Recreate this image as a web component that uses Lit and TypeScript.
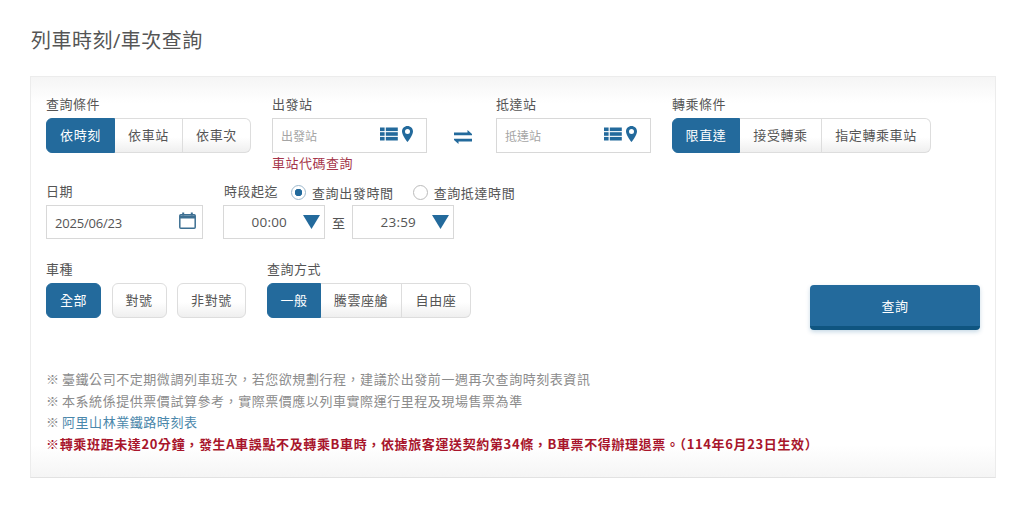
import { LitElement, html, css, svg } from 'lit'
import { customElement, state } from 'lit/decorators.js'
import { classMap } from 'lit/directives/class-map.js'

const BLUE = '#236a9c'

const listIcon = svg`<svg class="ico" width="18" height="14" viewBox="0 0 18 14" fill="${BLUE}">
  <rect x="0" y="0.5" width="4.6" height="3.6"/><rect x="5.8" y="0.5" width="12" height="3.6"/>
  <rect x="0" y="5.2" width="4.6" height="3.6"/><rect x="5.8" y="5.2" width="12" height="3.6"/>
  <rect x="0" y="9.9" width="4.6" height="3.6"/><rect x="5.8" y="9.9" width="12" height="3.6"/>
</svg>`

const pinIcon = svg`<svg class="ico" width="11" height="16" viewBox="0 0 11 16">
  <path fill="${BLUE}" fill-rule="evenodd" d="M5.5 0C2.5 0 0 2.4 0 5.4 0 9 5.5 16 5.5 16S11 9 11 5.4C11 2.4 8.5 0 5.5 0zM5.5 3a2.5 2.5 0 1 1 0 5 2.5 2.5 0 0 1 0-5z"/>
</svg>`

const swapIcon = svg`<svg width="18" height="14" viewBox="0 0 18 14" fill="${BLUE}">
  <path d="M0 2.6h13.5V0L18 4v1.2H0zM18 8.8v2.6H4.5V14L0 10V8.8z"/>
</svg>`

const calendarIcon = svg`<svg width="17" height="17" viewBox="0 0 17 17" fill="none" stroke="#3c6f92">
  <rect x="0.8" y="2.8" width="15.4" height="13.4" rx="1" stroke-width="1.5"/>
  <path d="M1 5h15" stroke-width="3"/>
  <path d="M4.2 0.5v3M12.8 0.5v3" stroke-width="2"/>
</svg>`

const caretIcon = svg`<svg width="17" height="14" viewBox="0 0 17 14"><path fill="${BLUE}" d="M0 0h17L8.5 14z"/></svg>`

type Seg = { label: string; w: number }

@customElement('app-root')
export class AppRoot extends LitElement {
  @state() mode = 0
  @state() transfer = 0
  @state() trainType = 0
  @state() method = 0
  @state() timeKind = 0

  static override styles = css`
    :host {
      --blue: #236a9c;
      display: block;
      height: 507px;
      box-sizing: border-box;
      padding: 0 28px 0 30px;
      background: #fff;
      font-family: 'Open Sans', 'Noto Sans CJK TC', sans-serif;
      font-size: 13px;
      color: #555;
      overflow: hidden;
    }
    h1 {
      margin: 0;
      height: 76px;
      padding: 27px 0 0 1px;
      box-sizing: border-box;
      font-size: 20px;
      line-height: 27px;
      font-weight: 400;
      color: #555;
      letter-spacing: 0.5px;
    }
    .panel {
      box-sizing: border-box;
      width: 966px;
      height: 402px;
      padding: 19px 15px 0;
      border: 1px solid #ececec;
      border-bottom-color: #e2e2e2;
      background: linear-gradient(#f5f5f5, #fff 26px, #fff calc(100% - 32px), #f5f5f5);
    }
    .row {
      display: flex;
      align-items: flex-start;
    }
    .row1 { height: 84px; }
    .row2 { height: 59px; }
    .row3 { height: 69px; margin-top: 22px; }
    .field { display: flex; flex-direction: column; }
    .label {
      height: 22px;
      line-height: 16px;
      letter-spacing: 0.5px;
      white-space: nowrap;
    }
    .row2 .label { height: 25px; line-height: 22px; }
    .seg {
      display: flex;
      height: 35px;
      box-sizing: border-box;
      border-radius: 6px;
    }
    button.opt {
      box-sizing: border-box;
      height: 35px;
      padding: 0 0 2px;
      font: inherit;
      letter-spacing: 0.6px;
      color: #555;
      background: linear-gradient(#fff 55%, #efefef);
      border: 1px solid #ddd;
      border-left-width: 0;
      cursor: pointer;
    }
    .seg button.opt:first-child { border-left-width: 1px; border-radius: 6px 0 0 6px; }
    .seg button.opt:last-child { border-radius: 0 6px 6px 0; }
    button.opt.on {
      background: var(--blue);
      border-color: var(--blue);
      color: #fff;
    }
    button.solo { border-left-width: 1px; border-radius: 6px; }
    .station {
      box-sizing: border-box;
      width: 155px;
      height: 35px;
      display: flex;
      align-items: center;
      padding: 0 13px 0 8px;
      gap: 4px;
      border: 1px solid #d8d8d8;
      background: #fff;
    }
    .station input {
      flex: 1;
      min-width: 0;
      border: 0;
      padding: 2px 0 0;
      outline: 0;
      background: none;
      font: inherit;
      font-size: 12px;
      color: #555;
    }
    .station input::placeholder { color: #a5a5a5; opacity: 1; }
    .ico { flex: none; display: block; margin-top: -4px; }
    .code {
      margin-top: 2px;
      line-height: 17px;
      letter-spacing: 0.5px;
      color: #a5354a;
      text-decoration: none;
    }
    .swap {
      width: 69px;
      height: 35px;
      margin-top: 22px;
      display: flex;
      align-items: center;
      justify-content: center;
      padding: 3px 0 0 2px;
      box-sizing: border-box;
    }
    .date {
      box-sizing: border-box;
      width: 157px;
      height: 34px;
      display: flex;
      align-items: center;
      justify-content: space-between;
      padding: 2px 6px 0 8px;
      border: 1px solid #d8d8d8;
      font-size: 13px;
      letter-spacing: -0.2px;
      color: #555;
    }
    .date svg { margin-top: -5px; }
    .radios { display: flex; align-items: center; height: 25px; }
    .radio {
      display: flex;
      align-items: center;
      gap: 6px;
      letter-spacing: 0.6px;
      white-space: nowrap;
    }
    .dot {
      box-sizing: border-box;
      width: 15px;
      height: 15px;
      border-radius: 50%;
      border: 1px solid #bbb;
      background: #fff;
    }
    .dot.on {
      border-color: #9db8cc;
      background: radial-gradient(circle, var(--blue) 0 3.5px, #fff 4px);
    }
    .times { display: flex; align-items: center; gap: 7px; }
    .time {
      box-sizing: border-box;
      width: 102px;
      height: 34px;
      display: flex;
      align-items: center;
      justify-content: flex-end;
      gap: 16px;
      padding-right: 4px;
      border: 1px solid #d8d8d8;
      font-size: 13.5px;
      letter-spacing: 0.2px;
    }
    .submit {
      box-sizing: border-box;
      width: 170px;
      height: 45px;
      margin: 24px 0 0 auto;
      border: 0;
      border-bottom: 4px solid #0f5580;
      border-radius: 4px;
      background: var(--blue);
      color: #fff;
      font: inherit;
      letter-spacing: 0.6px;
      box-shadow: 0 2px 4px rgba(35, 106, 156, 0.25);
      cursor: pointer;
    }
    .notes {
      margin: 38px 0 0;
      padding: 0;
      list-style: none;
      font-family: 'Noto Sans CJK TC', 'Open Sans', sans-serif;
      color: #8c8c8c;
      line-height: 21.7px;
      letter-spacing: 0.55px;
      word-spacing: -1px;
    }
    .notes a { color: #4a87ab; text-decoration: none; }
    .notes .warn { color: #a8152b; font-weight: 700; letter-spacing: 0.63px; }
  `

  private seg(items: Seg[], active: number, pick: (i: number) => void) {
    return html`<div class="seg">
      ${items.map(
        (it, i) => html`<button
          class=${classMap({ opt: true, on: i === active })}
          style="width:${it.w}px"
          @click=${() => pick(i)}
        >${it.label}</button>`,
      )}
    </div>`
  }

  private station(name: string) {
    return html`<div class="station">
      <input placeholder=${name} />
      ${listIcon}${pinIcon}
    </div>`
  }

  private time(value: string) {
    return html`<div class="time"><span>${value}</span>${caretIcon}</div>`
  }

  override render() {
    return html`
      <h1 lang="zh-TW">列車時刻/車次查詢</h1>
      <section class="panel" lang="zh-TW">
        <div class="row row1">
          <div class="field" style="width:226px">
            <div class="label">查詢條件</div>
            ${this.seg(
              [
                { label: '依時刻', w: 69 },
                { label: '依車站', w: 68 },
                { label: '依車次', w: 68 },
              ],
              this.mode,
              (i) => (this.mode = i),
            )}
          </div>
          <div class="field">
            <div class="label">出發站</div>
            ${this.station('出發站')}
            <a class="code" href="#">車站代碼查詢</a>
          </div>
          <div class="swap">${swapIcon}</div>
          <div class="field" style="width:176px">
            <div class="label">抵達站</div>
            ${this.station('抵達站')}
          </div>
          <div class="field">
            <div class="label">轉乘條件</div>
            ${this.seg(
              [
                { label: '限直達', w: 68 },
                { label: '接受轉乘', w: 82 },
                { label: '指定轉乘車站', w: 109 },
              ],
              this.transfer,
              (i) => (this.transfer = i),
            )}
          </div>
        </div>

        <div class="row row2">
          <div class="field" style="width:177px">
            <div class="label">日期</div>
            <div class="date">2025/06/23 ${calendarIcon}</div>
          </div>
          <div class="field">
            <div class="radios">
              <span class="label" style="margin:0 13px 0 1px">時段起迄</span>
              ${['查詢出發時間', '查詢抵達時間'].map(
                (t, i) => html`<label
                  class="radio"
                  style="margin-right:19px"
                  @click=${() => (this.timeKind = i)}
                ><span class=${classMap({ dot: true, on: i === this.timeKind })}></span>${t}</label>`,
              )}
            </div>
            <div class="times">
              ${this.time('00:00')}
              <span>至</span>
              ${this.time('23:59')}
            </div>
          </div>
        </div>

        <div class="row row3">
          <div class="field" style="width:221px">
            <div class="label">車種</div>
            <div class="row" style="gap:10.5px">
              ${[
                { label: '全部', w: 55 },
                { label: '對號', w: 55 },
                { label: '非對號', w: 69 },
              ].map(
                (it, i) => html`<button
                  class=${classMap({ opt: true, solo: true, on: i === this.trainType })}
                  style="width:${it.w}px"
                  @click=${() => (this.trainType = i)}
                >${it.label}</button>`,
              )}
            </div>
          </div>
          <div class="field">
            <div class="label">查詢方式</div>
            ${this.seg(
              [
                { label: '一般', w: 54 },
                { label: '騰雲座艙', w: 81 },
                { label: '自由座', w: 69 },
              ],
              this.method,
              (i) => (this.method = i),
            )}
          </div>
          <button class="submit">查詢</button>
        </div>

        <ul class="notes">
          <li>※ 臺鐵公司不定期微調列車班次，若您欲規劃行程，建議於出發前一週再次查詢時刻表資訊</li>
          <li>※ 本系統係提供票價試算參考，實際票價應以列車實際運行里程及現場售票為準</li>
          <li>※ <a href="#">阿里山林業鐵路時刻表</a></li>
          <li class="warn">※轉乘班距未達20分鐘，發生A車誤點不及轉乘B車時，依據旅客運送契約第34條，B車票不得辦理退票。（114年6月23日生效）</li>
        </ul>
      </section>
    `
  }
}
